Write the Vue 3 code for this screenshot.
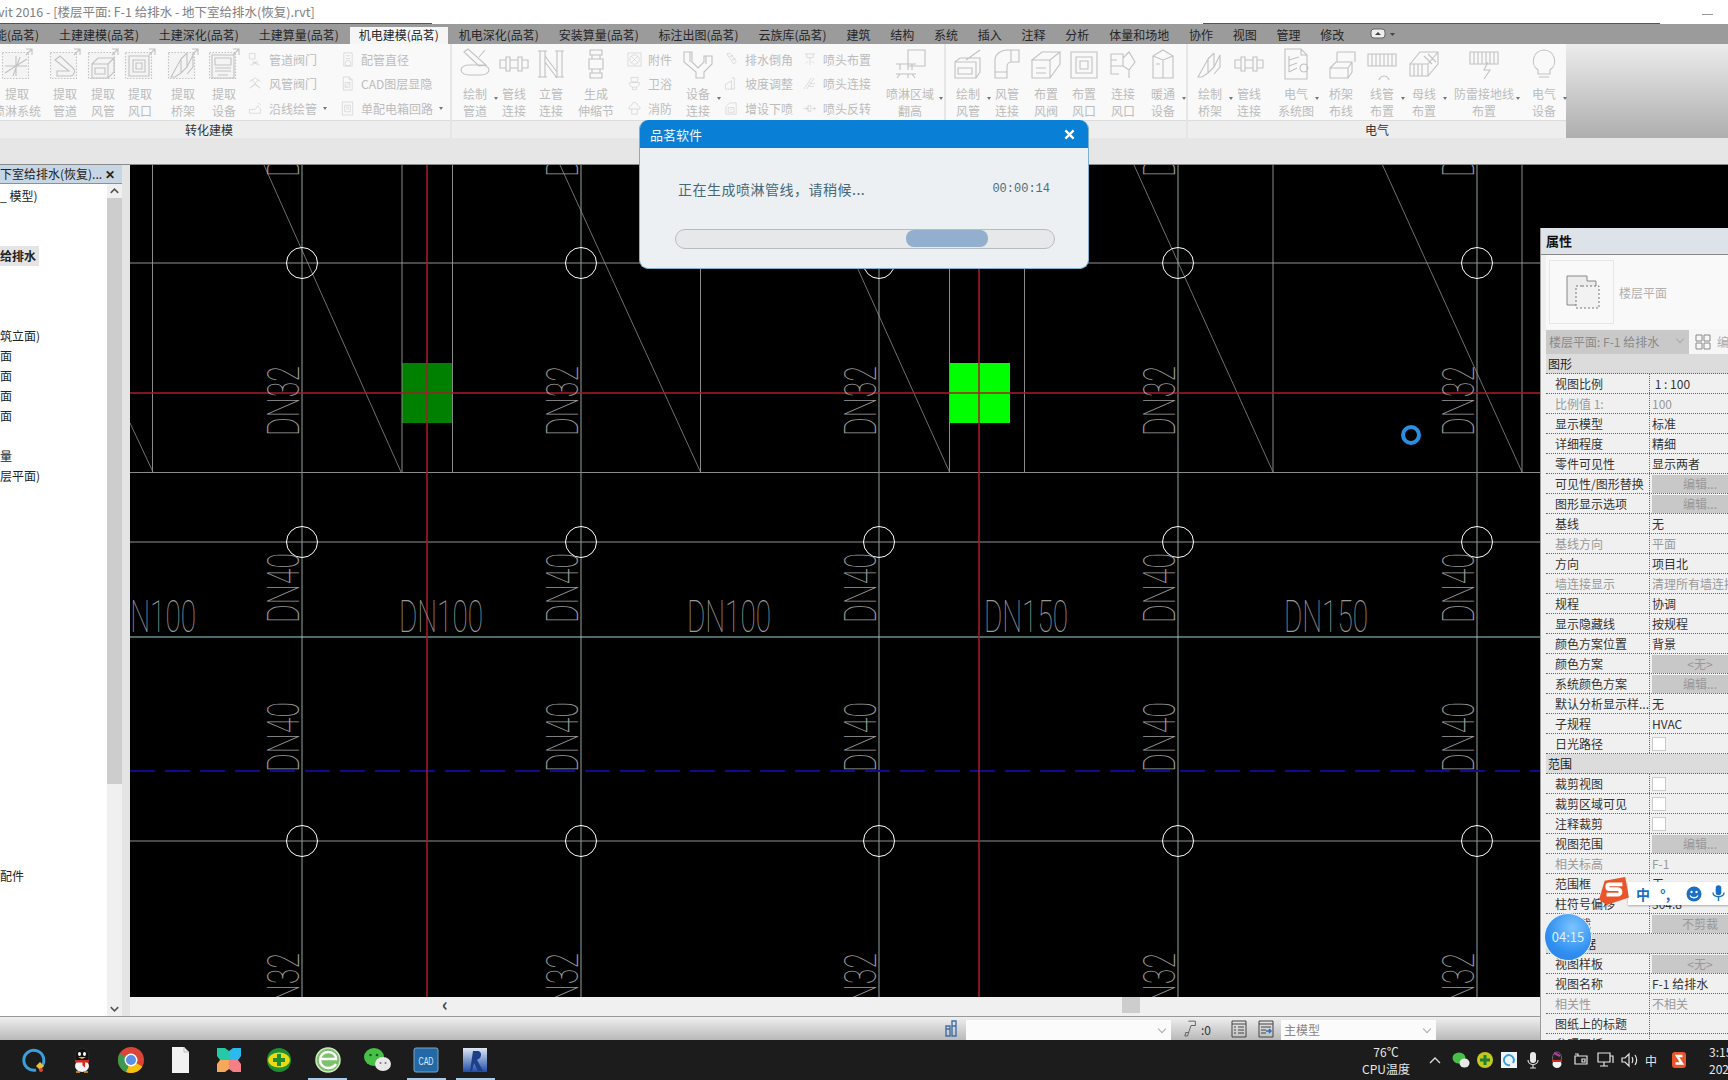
<template>
  <div class="page">
    <div class="titlebar">
      <span class="title-text">vit 2016 - [楼层平面: F-1 给排水 - 地下室给排水(恢复).rvt]</span>
      <span class="title-rule rule-a"></span>
      <span class="title-rule rule-b"></span>
      <span class="minimize"></span>
    </div>

    <div class="tabs">
      <div v-for="tab in tabs" :key="tab" class="tab" :class="{ active: tab === '机电建模(品茗)' }">{{ tab }}</div>
      <svg class="tab-toggle" viewBox="0 0 26 12" width="26" height="12">
        <rect x="1" y="1" width="14" height="9" rx="3" fill="#eee" stroke="#666" />
        <path d="M5 7l3-3 3 3z" fill="#444" />
        <path d="M20 5h5l-2.500 3z" fill="#444" />
      </svg>
    </div>

    <div class="ribbon">
      <div v-for="panel in panels" :key="panel.x" class="rb-panel" :style="{ width: panel.w + 'px' }">
        <div class="rb-items">
          <template v-for="item in panel.items" :key="item.cx">
            <div v-if="item.rows" class="rb-small" :style="itemStyle(item)">
              <div v-for="row in item.rows" :key="row.t" class="rb-row">
                <svg viewBox="0 0 32 32" width="15" height="15" class="ico">
                  <path :d="paths[row.i]" />
                </svg>
                <span>{{ row.t }}</span>
                <i v-if="row.more" class="caret"></i>
              </div>
            </div>
            <div v-else class="rb-big" :style="itemStyle(item)">
              <svg viewBox="0 0 32 32" width="32" height="32" class="ico">
                <rect v-if="item.frame" x="1.500" y="4.500" width="26" height="26" class="dots" />
                <path v-if="item.frame" d="M25 1h6v6M31 1l-6 6" />
                <path :d="paths[item.i]" />
              </svg>
              <div class="rb-label">{{ item.l[0] }}<br />{{ item.l[1] }}</div>
              <i v-if="item.more" class="caret big-caret"></i>
            </div>
          </template>
        </div>
        <div class="rb-title" :class="{ shifted: panel.x === 0 }">{{ panel.title }}</div>
      </div>
      <div class="rb-rest"></div>
    </div>

    <div class="subband"></div>

    <div class="main">
      <div class="browser">
        <div class="browser-head">
          <span>下室给排水(恢复)...</span>
          <b>✕</b>
        </div>
        <div class="browser-body">
          <div class="tree">
            <div v-for="(row, i) in tree" :key="i" class="tree-row">
              <span :class="{ current: row === '给排水' }">{{ row }}</span>
            </div>
          </div>
          <div class="vbar">
            <svg viewBox="0 0 16 12" width="15" height="14"><path d="M4 8l4-4 4 4" fill="none" stroke="#555" stroke-width="1.600" /></svg>
            <div class="vthumb"></div>
            <svg viewBox="0 0 16 12" width="15" height="14"><path d="M4 4l4 4 4-4" fill="none" stroke="#555" stroke-width="1.600" /></svg>
          </div>
        </div>
      </div>

      <div class="view">
        <svg class="cad" viewBox="130 165 1598 832" width="1598" height="832">
          <rect x="402" y="363" width="51" height="60" fill="#008000" />
          <rect x="950" y="363" width="60" height="60" fill="#00ff00" />
          <line v-for="x in shortLines" :key="'s' + x" :x1="x" :x2="x" y1="165" y2="472" stroke="#8a8a8a" />
          <line v-for="d in diagonals" :key="d[0]" :x1="d[0]" y1="165" :x2="d[1]" y2="472" stroke="#8a8a8a" stroke-width=".8" />
          <line x1="130" x2="153" y1="423" y2="472" stroke="#8a8a8a" stroke-width=".8" />
          <line v-for="x in gridX" :key="'g' + x" :x1="x" :x2="x" y1="165" y2="997" stroke="#8fa5a2" />
          <line v-for="y in gridY" :key="'h' + y" x1="130" x2="1728" :y1="y" :y2="y" stroke="#929292" />
          <line x1="130" x2="1728" y1="472.500" y2="472.500" stroke="#8a8a8a" />
          <line x1="130" x2="1728" y1="637" y2="637" stroke="#9ad6d6" />
          <line x1="130" x2="1728" y1="771" y2="771" stroke="#0c0c8c" stroke-width="2" stroke-dasharray="25 10" />
          <line x1="130" x2="1728" y1="393" y2="393" stroke="#a81c2a" stroke-width="1.500" />
          <line x1="427" x2="427" y1="165" y2="997" stroke="#a81c2a" stroke-width="1.500" />
          <line x1="979" x2="979" y1="165" y2="997" stroke="#a81c2a" stroke-width="1.500" />
          <g v-for="x in gridX" :key="'c' + x">
            <circle v-for="y in gridY" :key="y" :cx="x" :cy="y" r="15.500" fill="none" stroke="#fff" />
            <text v-for="t in vLabels" :key="t.y" class="dn" :transform="`translate(${x - 3} ${t.y}) rotate(-90)`" textLength="70" lengthAdjust="spacingAndGlyphs">{{ t.t }}</text>
          </g>
          <text v-for="t in hLabels" :key="t.x" class="dn" :x="t.x" y="632" textLength="84" lengthAdjust="spacingAndGlyphs">{{ t.t }}</text>
          <circle cx="1411" cy="435" r="8" fill="none" stroke="#2a8fe0" stroke-width="4" />
        </svg>
        <div class="hbar">
          <span class="hbar-arrow">‹</span>
          <span class="hbar-thumb"></span>
        </div>
      </div>
    </div>

    <div class="status">
      <svg viewBox="0 0 16 20" width="16" height="20" class="status-ico">
        <path d="M3 8h4v10H3zM9 3h4v15H9zM3 11h4M9 8h4" fill="none" stroke="#3f6fa6" stroke-width="1.400" />
      </svg>
      <div class="status-input wide"><i class="chev"></i></div>
      <svg viewBox="0 0 16 20" width="14" height="20" class="status-pick">
        <path d="M5 1h8v5H8L4 18H1l1-4h3" fill="none" stroke="#555" />
      </svg>
      <span class="status-zero">:0</span>
      <svg viewBox="0 0 16 18" width="16" height="18" class="status-list">
        <path d="M1 1h14v16H1zM1 4h14M3 7h2M7 7h6M3 10h2M7 10h6M3 13h2M7 13h6" fill="none" stroke="#444" />
      </svg>
      <svg viewBox="0 0 16 18" width="16" height="18" class="status-list2">
        <path d="M1 1h14v16H1zM1 4h14M3 7h10M3 10h5M3 13h5" fill="none" stroke="#444" />
        <path d="M8 11h5M11 9l2 2-2 2" fill="none" stroke="#2a6fc0" stroke-width="1.500" />
      </svg>
      <div class="status-input narrow">主模型<i class="chev"></i></div>
    </div>

    <div class="taskbar">
      <div class="task-icons">
        <div class="slot">
          <svg viewBox="0 0 30 30" width="30" height="30">
            <path d="M24 21A10 10 0 1 0 18 25" fill="none" stroke="#3aa0dc" stroke-width="3" />
            <path d="M22 17l4 4-4 4-4-4z" fill="#e8c12c" />
            <circle cx="23" cy="25" r="2" fill="#d9483b" />
          </svg>
        </div>
        <div class="slot">
          <svg viewBox="0 0 30 30" width="30" height="30">
            <ellipse cx="15" cy="12" rx="7" ry="9" fill="#111" stroke="#2c2c2c" />
            <ellipse cx="15" cy="21" rx="7" ry="6" fill="#f4f4f4" />
            <ellipse cx="12.500" cy="9" rx="1.500" ry="2" fill="#fff" />
            <ellipse cx="17.500" cy="9" rx="1.500" ry="2" fill="#fff" />
            <path d="M11 12h8l-4 2z" fill="#f5b324" />
            <path d="M8 15h14v2.500H18v5l-2.500-2V17.500H8z" fill="#d8271f" />
            <path d="M9 27h4M17 27h4" stroke="#e8a11c" stroke-width="1.500" />
          </svg>
        </div>
        <div class="slot">
          <svg viewBox="0 0 30 30" width="30" height="30">
            <circle cx="15" cy="15" r="13" fill="#db4437" />
            <path d="M15 15L26.300 21.500A13 13 0 0 1 10 27z" fill="#f4c20d" />
            <path d="M15 15L10 27A13 13 0 0 1 3.700 8.500z" fill="#3d9a4c" />
            <circle cx="15" cy="15" r="6.500" fill="#fff" />
            <circle cx="15" cy="15" r="5" fill="#5b8fe8" />
          </svg>
        </div>
        <div class="slot">
          <svg viewBox="0 0 30 30" width="30" height="30"><path d="M7 2h12l5 5v21H7z" fill="#f2f2f2" /><path d="M19 2v5h5" fill="none" stroke="#bbb" /></svg>
        </div>
        <div class="slot">
          <svg viewBox="0 0 30 30" width="30" height="30">
            <rect x="3" y="3" width="12" height="12" fill="#26c9a6" />
            <rect x="15" y="3" width="12" height="12" fill="#2eb9ec" />
            <rect x="3" y="15" width="12" height="12" fill="#f5a85c" />
            <rect x="15" y="15" width="12" height="12" fill="#f47f86" />
            <path d="M3 11l3 4-3 4zM27 11l-3 4 3 4zM11 3l4 3 4-3zM11 27l4-3 4 3z" fill="#1c1c1c" />
          </svg>
        </div>
        <div class="slot">
          <svg viewBox="0 0 30 30" width="30" height="30">
            <circle cx="15" cy="15" r="12" fill="#1f8f33" />
            <ellipse cx="15" cy="15" rx="11" ry="7.500" fill="#ecd90f" />
            <path d="M13 9h4v4h4v4h-4v4h-4v-4H9v-4h4z" fill="#1f8f33" />
          </svg>
        </div>
        <div class="slot has-bar">
          <svg viewBox="0 0 30 30" width="30" height="30">
            <circle cx="15" cy="15" r="12" fill="#7cc26a" stroke="#d4e8c8" stroke-width="1.500" />
            <path d="M7 14h16c0-5-4-7-8-7s-8 3-8 8 4 8 8 8c3 0 6-1 8-4" fill="none" stroke="#fff" stroke-width="2.500" />
          </svg>
        </div>
        <div class="slot">
          <svg viewBox="0 0 30 30" width="30" height="30">
            <ellipse cx="12" cy="12" rx="10" ry="9" fill="#46c046" />
            <ellipse cx="21" cy="19" rx="8" ry="7" fill="#e8e8e8" />
            <circle cx="8.500" cy="10" r="1.300" fill="#1c5c1c" />
            <circle cx="15" cy="10" r="1.300" fill="#1c5c1c" />
            <circle cx="18.500" cy="18" r="1" fill="#777" />
            <circle cx="23.500" cy="18" r="1" fill="#777" />
          </svg>
        </div>
        <div class="slot has-bar">
          <svg viewBox="0 0 30 30" width="30" height="30">
            <rect x="3" y="3" width="24" height="24" rx="2" fill="#2369a8" stroke="#7fa4c4" />
            <text x="15" y="20" text-anchor="middle" class="cad-mark" textLength="15" lengthAdjust="spacingAndGlyphs">CAD</text>
          </svg>
        </div>
        <div class="slot has-bar">
          <svg viewBox="0 0 30 30" width="30" height="30">
            <defs>
              <linearGradient id="rvt" x1="0" x2="0" y1="0" y2="1">
                <stop offset="0" stop-color="#dfe8f4" />
                <stop offset="1" stop-color="#1e4ea8" />
              </linearGradient>
            </defs>
            <rect x="3" y="3" width="24" height="24" fill="url(#rvt)" />
            <path d="M10 26l3-20h5c3 0 4 4 2 7l-3 2 6 11h-5l-4-8-2 8z" fill="#1c3f88" />
          </svg>
        </div>
      </div>

      <div class="tray">
        <div class="temp">76℃<br />CPU温度</div>
        <svg viewBox="0 0 12 12" width="12" height="12" class="tray-up"><path d="M1 9l5-5 5 5" fill="none" stroke="#ddd" stroke-width="1.300" /></svg>
        <svg viewBox="0 0 18 18" width="18" height="18" class="tray-ico"><ellipse cx="7" cy="7" rx="6.500" ry="5.500" fill="#46c046" /><ellipse cx="12.500" cy="12" rx="5" ry="4.500" fill="#e8e8e8" /></svg>
        <svg viewBox="0 0 18 18" width="18" height="18" class="tray-ico"><circle cx="9" cy="9" r="8" fill="#c5c81f" /><path d="M7.500 4h3v3.500H14v3h-3.500V14h-3v-3.500H4v-3h3.500z" fill="#1f7f33" /></svg>
        <svg viewBox="0 0 18 18" width="18" height="18" class="tray-ico"><rect x="1" y="1" width="16" height="16" fill="#eef4fa" /><path d="M13 12a5 5 0 1 0-3 2" fill="none" stroke="#3aa0dc" stroke-width="2" /></svg>
        <svg viewBox="0 0 18 18" width="18" height="18" class="tray-ico"><rect x="6" y="1" width="6" height="11" rx="3" fill="#e8e8e8" /><path d="M4 9c0 6 10 6 10 0M9 13v4M6 17h6" fill="none" stroke="#ddd" stroke-width="1.200" /></svg>
        <svg viewBox="0 0 18 18" width="18" height="18" class="tray-ico"><ellipse cx="9" cy="7" rx="4.500" ry="6" fill="#222" stroke="#666" /><ellipse cx="9" cy="13" rx="4.500" ry="4" fill="#f2f2f2" /><path d="M4 9h10v2H4z" fill="#d8271f" /><path d="M6 2l6 3" stroke="#c038a8" stroke-width="2" /></svg>
        <svg viewBox="0 0 18 18" width="18" height="18" class="tray-ico"><path d="M3 5h12v8H3zM3 3h3v2M10 8h3v3h-3z" fill="none" stroke="#e4e4e4" stroke-width="1.200" /></svg>
        <svg viewBox="0 0 18 18" width="18" height="18" class="tray-ico"><path d="M2 2h12v9H2zM8 11v4M4 15h8M14 5h3v7" fill="none" stroke="#e4e4e4" stroke-width="1.200" /></svg>
        <svg viewBox="0 0 18 18" width="18" height="18" class="tray-ico"><path d="M2 7h3l4-4v12l-4-4H2zM12 6c1 2 1 4 0 6M15 4c2 3 2 7 0 10" fill="none" stroke="#e4e4e4" stroke-width="1.200" /></svg>
        <span class="tray-ime">中</span>
        <svg viewBox="0 0 18 18" width="18" height="18" class="tray-ico tray-sogou"><rect x="2" y="1" width="14" height="16" rx="3" fill="#e9542a" /><path d="M12.500 5H7l5 7.500H5.500" fill="none" stroke="#fff" stroke-width="2.400" /></svg>
        <div class="clock">3:15<br />2021/6/8</div>
      </div>
    </div>

    <div class="dialog">
      <div class="dialog-head">
        <span>品茗软件</span>
        <svg viewBox="0 0 12 12" width="11" height="11"><path d="M1.500 1.500l9 9M10.500 1.500l-9 9" stroke="#fff" stroke-width="2.500" /></svg>
      </div>
      <div class="dialog-body">
        <div class="dialog-msg">
          <span>正在生成喷淋管线，请稍候...</span>
          <span class="dialog-time">00:00:14</span>
        </div>
        <div class="progress"><div class="progress-thumb"></div></div>
      </div>
    </div>

    <div class="props">
      <div class="props-head">属性</div>
      <div class="props-type">
        <div class="type-box">
          <svg viewBox="0 0 40 40" width="40" height="40">
            <path d="M5 4h20v5h9v24H5z" fill="#ececec" stroke="#888" />
            <path d="M20 14h17v22H14V14h6" fill="#f2f2f2" stroke="#777" stroke-dasharray="2 2" />
          </svg>
        </div>
        <span>楼层平面</span>
      </div>
      <div class="props-select">
        <div class="select-box">楼层平面: F-1 给排水<i class="chev"></i></div>
        <svg viewBox="0 0 16 16" width="16" height="16"><path d="M1 1h6v6H1zM9 1h6v6H9zM1 9h6v6H1zM9 9h6v6H9z" fill="none" stroke="#888" /></svg>
        <span>编辑类型</span>
      </div>
      <template v-for="row in props" :key="row.k">
        <div v-if="row.group" class="prop-group">{{ row.k }}</div>
        <div v-else class="prop-row" :class="{ dim: row.dim }">
          <div class="prop-key">{{ row.k }}</div>
          <div class="prop-val">
            <span v-if="row.btn" class="prop-btn">{{ row.btn }}</span>
            <span v-else-if="row.check" class="prop-check"></span>
            <template v-else>{{ row.v }}</template>
          </div>
        </div>
      </template>
    </div>

    <div class="ime">
      <svg viewBox="0 0 32 30" width="32" height="28" class="ime-logo">
        <path d="M6 4l22-4 4 22-24 8L0 24z" fill="#e9542a" />
        <path d="M25 8H11c-3 0-3 5 0 5h9c4 0 4 6 0 6H8" fill="none" stroke="#fff" stroke-width="4" />
      </svg>
      <div class="ime-bar">
        <span class="ime-zh">中</span>
        <span class="ime-punct">°,</span>
        <svg viewBox="0 0 16 16" width="16" height="16"><circle cx="8" cy="8" r="7.500" fill="#1a6fc4" /><circle cx="5.500" cy="6" r="1.200" fill="#fff" /><circle cx="10.500" cy="6" r="1.200" fill="#fff" /><path d="M4 9.500c1.500 3 6.500 3 8 0" fill="none" stroke="#fff" stroke-width="1.300" /></svg>
        <svg viewBox="0 0 14 18" width="13" height="17"><rect x="4" y="0" width="6" height="11" rx="3" fill="#1a6fc4" /><path d="M1 8c0 6 12 6 12 0M7 13v4" fill="none" stroke="#1a6fc4" stroke-width="1.500" /></svg>
      </div>
    </div>

    <div class="timer">04:15</div>
  </div>
</template>

<script setup>
const tabs = [
  '能(品茗)', '土建建模(品茗)', '土建深化(品茗)', '土建算量(品茗)', '机电建模(品茗)', '机电深化(品茗)',
  '安装算量(品茗)', '标注出图(品茗)', '云族库(品茗)', '建筑', '结构', '系统', '插入', '注释', '分析',
  '体量和场地', '协作', '视图', '管理', '修改'
]

// ribbon glyphs, drawn in a 32x32 box
const paths = {
  sprink: 'M4 25L26 11M4 18H26M12 28L19 9M15 8V28',
  pipe: 'M6 12l5-4 13 12c3 3 1 8-3 8H8v-5h12L6 12z',
  duct: 'M5 16l6-6h16v14l-6 6H5zM5 16h16v14M21 16l6-6M8 20h10v6H8z',
  vent: 'M5 8h20v20H5zM9 12h12v12H9zM12 15h6v6h-6z',
  tray: 'M4 29l10-18v14l-6 4zM14 11l6-6M14 25l6-6V5M20 19l6-12v12l-6 7',
  equip: 'M4 7h22v23H4zM7 10h16v7H7zM7 20h16M7 23h16M10 27h10',
  vlv: 'M3 3h12v12H3zM5 28l10-7 10 7M9 19l12 9M21 19l-12 9',
  vlv2: 'M3 12l12-8 12 8M3 26l12-8 12 8M8 8l14 16M22 8L8 24',
  along: 'M3 18h12l6-8 6 8v8H3zM21 4l6 4',
  dia: 'M8 2h18v28H8zM12 8h10M12 14h10M11 24a6 6 0 1 0 12 0 6 6 0 1 0-12 0',
  layer: 'M7 2h13l6 6v22H7zM20 2v6h6M11 14h10v10H11zM11 24l10-10',
  box: 'M5 2h22v28H5zM10 9h12v14H10zM13 13h6M13 17h6',
  drawPipe: 'M2 22c0-3 4-5 8-5h12c4 0 8 2 8 5s-4 5-8 5H10c-4 0-8-2-8-5zM5 4l4-3 18 16-7 1zM20 9l6-7',
  joint: 'M2 12h6v8H2zM8 9h4v14H8zM12 12h8v8h-8zM20 9h4v14h-4zM24 12h6v8h-6z',
  riser: 'M5 3v26M10 3v26M22 3v26M27 3v26M10 8l12 16M10 14l12 16M3 3h9M20 3h9M3 29h9M20 29h9',
  expand: 'M10 2h12v5H10zM12 7h8v4h-8zM9 11h14v10H9zM12 21h8v4h-8zM10 25h12v5H10z',
  fan: 'M2 2h28v28H2zM16 6a10 10 0 1 0 .1 0zM9 9l14 14M23 9L9 23',
  bath: 'M8 3h16l-2 9H10zM5 14h22c0 8-6 10-11 10S5 22 5 14zM12 24v5h8v-5',
  fire: 'M16 3a6 6 0 0 1 6 6c4 1 6 5 6 8H4c0-3 2-7 6-8a6 6 0 0 1 6-6zM10 17v11h12V17',
  fitting: 'M2 4h8v10l6 6 6-6V8h8v8l-8 8v6H14v-6L2 14zM8 4v10M24 8v8',
  bevel: 'M6 4l6-2 14 18-5 6zM12 10l8-3M17 17l8-3',
  slope: 'M3 28V18l13-8v18zM16 4h6v24h-6',
  drop: 'M4 12l8-8h14v24H4zM9 14h12v10H9zM13 18h4',
  head: 'M6 4h22M10 4v8h14V4M17 12v8M8 24l4-4M17 28v-8M26 24l-4-4',
  headLink: 'M4 28l16-24M10 28l16-24M16 14c3 2 8 3 12 2M14 20c3 2 8 3 12 2',
  flip: 'M3 16h10M9 12l4 4-4 4M13 10h6v12h-6zM22 16h8M26 12v8',
  zone: 'M14 2h17v16H14zM2 16h20M6 16v6M14 16v6M18 16v6M2 26h20M6 26l-3 4M14 26v4M18 26l3 4',
  drawDuct: 'M3 14h21v16H3zM3 14l5-4h20v14l-4 6M6 20h14v6H6zM14 12L28 2',
  ductLink: 'M4 24V12C4 6 10 2 16 2h12v12h-8c-3 0-4 3-4 6v10H4zM4 24h12M20 2v12',
  damper: 'M2 12l10-8h18L20 12zM2 12v18h18V12M6 20h10M6 25h10M20 30l10-14V4',
  outlet: 'M3 4h26v26H3zM8 9h16v16H8zM12 13h8v8h-8z',
  linkOut: 'M4 6h12v12H4zM16 10l6-6 6 10-6 8-6-4zM22 22v8M4 12h6M4 18v8h8',
  hvac: 'M6 8l10-6 10 6v22H6zM6 8l10 4 10-4M16 12v18M9 16h4',
  bulb: 'M16 2a11 11 0 0 1 6 20v4H10v-4A11 11 0 0 1 16 2zM11 29h10',
  sysDoc: 'M5 1h16l6 6v24H5zM21 1v6h6M9 8v16M9 12l10-3M9 18l8-3M9 24l8-4M24 24a4 4 0 1 0-.1 0',
  route: 'M5 20l6-6h16v10l-4 6H5zM5 20h18v10M12 4h18v10M12 4v10M23 20l4-6',
  conduit: 'M2 6h28v12H2zM6 6v12M10 6v12M14 6v12M18 6v12M22 6v12M26 6v12M18 28a5 5 0 1 0 .1 0',
  busbar: 'M2 16L12 4h18v12L20 28H2zM2 16h18v12M20 16l10-12M6 16v12M10 16v12M14 16v12M16 8l8 8M20 6l8 8',
  lightning: 'M2 4h28v12H2zM6 4v12M10 4v12M14 4v12M18 4v12M22 4v12M26 4v12M20 14l-4 8h6l-6 9'
}

function big(cx, i, l, opts = {}) {
  return { cx, w: 38, i, l, ...opts }
}

function small(x, w, rows) {
  return { cx: x + w / 2, w, rows }
}

// items sit in a flex row, the margin is what is left between two item centres
function withMargins(list) {
  list.forEach(panel => {
    let end = panel.x
    panel.items.forEach(item => {
      item.ml = item.cx - item.w / 2 - end
      end = item.cx + item.w / 2
    })
  })
  return list
}

const panels = withMargins([
  {
    x: 0, w: 450, title: '转化建模',
    items: [
      big(17, 'sprink', ['提取', '喷淋系统'], { frame: true }),
      big(65, 'pipe', ['提取', '管道'], { frame: true }),
      big(103, 'duct', ['提取', '风管'], { frame: true }),
      big(140, 'vent', ['提取', '风口'], { frame: true }),
      big(183, 'tray', ['提取', '桥架'], { frame: true }),
      big(224, 'equip', ['提取', '设备'], { frame: true }),
      small(248, 92, [{ t: '管道阀门', i: 'vlv' }, { t: '风管阀门', i: 'vlv2' }, { t: '沿线绘管', i: 'along', more: true }]),
      small(340, 108, [{ t: '配管直径', i: 'dia' }, { t: 'CAD图层显隐', i: 'layer' }, { t: '单配电箱回路', i: 'box', more: true }])
    ]
  },
  {
    x: 452, w: 492, title: '',
    items: [
      big(475, 'drawPipe', ['绘制', '管道'], { more: true }),
      big(514, 'joint', ['管线', '连接']),
      big(551, 'riser', ['立管', '连接']),
      big(596, 'expand', ['生成', '伸缩节']),
      small(627, 50, [{ t: '附件', i: 'fan' }, { t: '卫浴', i: 'bath' }, { t: '消防', i: 'fire' }]),
      big(698, 'fitting', ['设备', '连接'], { more: true }),
      small(724, 72, [{ t: '排水倒角', i: 'bevel' }, { t: '坡度调整', i: 'slope' }, { t: '增设下喷', i: 'drop' }]),
      small(802, 72, [{ t: '喷头布置', i: 'head' }, { t: '喷头连接', i: 'headLink' }, { t: '喷头反转', i: 'flip' }]),
      { ...big(910, 'zone', ['喷淋区域', '翻高'], { more: true }), w: 58 }
    ]
  },
  {
    x: 946, w: 240, title: '',
    items: [
      big(968, 'drawDuct', ['绘制', '风管'], { more: true }),
      big(1007, 'ductLink', ['风管', '连接']),
      big(1046, 'damper', ['布置', '风阀']),
      big(1084, 'outlet', ['布置', '风口']),
      big(1123, 'linkOut', ['连接', '风口']),
      big(1163, 'hvac', ['暖通', '设备'], { more: true })
    ]
  },
  {
    x: 1188, w: 378, title: '电气',
    items: [
      big(1210, 'tray', ['绘制', '桥架'], { more: true }),
      big(1249, 'joint', ['管线', '连接']),
      big(1296, 'sysDoc', ['电气', '系统图'], { more: true }),
      big(1341, 'route', ['桥架', '布线']),
      big(1382, 'conduit', ['线管', '布置'], { more: true }),
      big(1424, 'busbar', ['母线', '布置'], { more: true }),
      { ...big(1484, 'lightning', ['防雷接地线', '布置'], { more: true }), w: 64 },
      big(1544, 'bulb', ['电气', '设备'], { more: true })
    ]
  }
])

function itemStyle(item) {
  return { width: item.w + 'px', marginLeft: item.ml + 'px' }
}

const tree = [
  '_ 模型)', '', '', '给排水', '', '', '', '筑立面)', '面', '面', '面', '面', '', '量', '层平面)',
  '', '', '', '', '', '', '', '', '', '', '', '', '', '', '', '', '', '', '', '配件'
]

const gridX = [302, 581, 879, 1178, 1477]
const gridY = [263, 542, 841]
const shortLines = [152.5, 402, 452.5, 700.5, 949.5, 1024.5, 1273, 1522]
const diagonals = [[264, 401], [560, 700.5], [811, 949.5], [1134, 1273], [1382.5, 1522]]
const vLabels = [
  { t: 'DN32', y: 177 },
  { t: 'DN32', y: 436 },
  { t: 'DN40', y: 623 },
  { t: 'DN40', y: 772 },
  { t: 'DN32', y: 1023 }
]
const hLabels = [
  { t: 'DN100', x: 112 },
  { t: 'DN100', x: 399 },
  { t: 'DN100', x: 687 },
  { t: 'DN150', x: 984 },
  { t: 'DN150', x: 1284 }
]

const edit = '编辑...'
const props = [
  { k: '图形', group: true },
  { k: '视图比例', v: ' 1 : 100' },
  { k: '比例值 1:', v: '100', dim: true },
  { k: '显示模型', v: '标准' },
  { k: '详细程度', v: '精细' },
  { k: '零件可见性', v: '显示两者' },
  { k: '可见性/图形替换', btn: edit },
  { k: '图形显示选项', btn: edit },
  { k: '基线', v: '无' },
  { k: '基线方向', v: '平面', dim: true },
  { k: '方向', v: '项目北' },
  { k: '墙连接显示', v: '清理所有墙连接', dim: true },
  { k: '规程', v: '协调' },
  { k: '显示隐藏线', v: '按规程' },
  { k: '颜色方案位置', v: '背景' },
  { k: '颜色方案', btn: '<无>' },
  { k: '系统颜色方案', btn: edit },
  { k: '默认分析显示样...', v: '无' },
  { k: '子规程', v: 'HVAC' },
  { k: '日光路径', check: true },
  { k: '范围', group: true },
  { k: '裁剪视图', check: true },
  { k: '裁剪区域可见', check: true },
  { k: '注释裁剪', check: true },
  { k: '视图范围', btn: edit },
  { k: '相关标高', v: 'F-1', dim: true },
  { k: '范围框', v: '无' },
  { k: '柱符号偏移', v: '304.8' },
  { k: '截剪裁', btn: '不剪裁' },
  { k: '标识数据', group: true },
  { k: '视图样板', btn: '<无>' },
  { k: '视图名称', v: 'F-1 给排水' },
  { k: '相关性', v: '不相关', dim: true },
  { k: '图纸上的标题', v: '' },
  { k: '参照图纸', v: '' }
]
</script>

<style>
html,
body {
  margin: 0;
  background: #000;
}
</style>

<style scoped>
.page {
  position: relative;
  width: 1728px;
  height: 1080px;
  overflow: hidden;
  display: flex;
  flex-direction: column;
  background: #e4e4e4;
  font-family: "Noto Sans CJK SC", "Liberation Sans", sans-serif;
  font-size: 12px;
  color: #222;
}

.titlebar {
  position: relative;
  height: 24px;
  flex: none;
  background: #fff;
  line-height: 24px;
  color: #808080;
  font-size: 12.500px;
}

.title-text {
  display: block;
  margin-left: -2px;
  white-space: nowrap;
}

.title-rule {
  position: absolute;
  bottom: 0;
  height: 1px;
  background: #555;
}

.rule-a {
  left: 0;
  width: 432px;
}

.rule-b {
  left: 1203px;
  width: 457px;
}

.minimize {
  position: absolute;
  left: 1702px;
  top: 14px;
  width: 11px;
  height: 1px;
  background: #999;
}

.tabs {
  height: 20px;
  flex: none;
  display: flex;
  align-items: center;
  background: #9b9b9b;
}

.tab {
  height: 20px;
  line-height: 22px;
  padding: 0 9.900px;
  color: #262626;
  white-space: nowrap;
}

.tab:first-child {
  padding-left: 0;
  margin-left: -5px;
}

.tab.active {
  align-self: flex-end;
  background: #f5f5f5;
  height: 17px;
  line-height: 16px;
  padding: 0 9px;
  margin: 0 1px;
}

.tab-toggle {
  margin-left: 16px;
}

.ribbon {
  height: 94px;
  flex: none;
  display: flex;
  gap: 2px;
  background: #e6e6e6;
}

.rb-panel {
  flex: none;
  display: flex;
  flex-direction: column;
  background: #f9f9f9;
}

.rb-items {
  height: 76px;
  display: flex;
}

.rb-big {
  position: relative;
  flex: none;
  display: flex;
  flex-direction: column;
  align-items: center;
  padding-top: 4px;
  color: #bcbcbc;
}

.rb-label {
  margin-top: 5px;
  line-height: 17px;
  text-align: center;
  white-space: nowrap;
}

.ico {
  fill: none;
  stroke: #c2c2c2;
  stroke-width: 1.100;
  flex: none;
}

.dots {
  stroke-dasharray: 1.500 1.500;
  fill: #f4f4f4;
}

.rb-small {
  flex: none;
  padding-top: 3px;
  color: #bcbcbc;
}

.rb-row {
  height: 24.500px;
  display: flex;
  align-items: center;
  gap: 6px;
  white-space: nowrap;
}

.caret {
  display: inline-block;
  width: 0;
  height: 0;
  border-left: 2.500px solid transparent;
  border-right: 2.500px solid transparent;
  border-top: 3px solid #777;
}

.big-caret {
  position: absolute;
  right: -4px;
  top: 53px;
}

.rb-title {
  height: 17px;
  line-height: 17px;
  text-align: center;
  border-top: 1px solid #dcdcdc;
  background: #eee;
  color: #333;
  font-size: 12px;
}

.rb-title.shifted {
  padding-right: 32px;
}

.rb-rest {
  flex: 1;
  margin-left: -2px;
  background: linear-gradient(#ececec, #aeaeae);
}

.subband {
  height: 26px;
  flex: none;
  background: #e6e6e6;
  border-bottom: 1px solid #8a8a8a;
}

.main {
  height: 851px;
  flex: none;
  display: flex;
  justify-content: space-between;
  border-bottom: 1px solid #999;
}

.browser {
  width: 122px;
  flex: none;
  display: flex;
  flex-direction: column;
}

.browser-head {
  height: 18px;
  flex: none;
  display: flex;
  justify-content: space-between;
  padding: 0 7px 0 0;
  line-height: 18px;
  background: #c7d6e4;
  border-bottom: 1px solid #8a9199;
  white-space: nowrap;
  overflow: hidden;
  font-size: 12px;
}

.browser-head b {
  font-size: 12px;
  color: #222;
}

.browser-body {
  flex: 1;
  display: flex;
  background: #fff;
}

.tree {
  flex: 1;
  min-width: 0;
  overflow: hidden;
  padding-top: 2px;
}

.tree-row {
  height: 20px;
  line-height: 20px;
  white-space: nowrap;
}

.current {
  display: inline-block;
  padding-right: 3px;
  background: #e4e4e4;
  font-weight: 700;
}

.vbar {
  width: 15px;
  flex: none;
  display: flex;
  flex-direction: column;
  background: #f0f0f0;
}

.vbar svg {
  flex: none;
}

.vthumb {
  height: 586px;
  margin-bottom: auto;
  background: #cdcdcd;
}

.view {
  width: 1598px;
  flex: none;
  display: flex;
  flex-direction: column;
}

.cad {
  display: block;
  flex: none;
  background: #000;
}

.dn {
  font-family: Roboto, "Liberation Sans", sans-serif;
  font-weight: 100;
  font-size: 44px;
  fill: #a8a8a8;
  opacity: 0.9;
}

.hbar {
  flex: 1;
  position: relative;
  background: #f0f0f0;
}

.hbar-arrow {
  position: absolute;
  left: 312px;
  top: -3px;
  font-size: 18px;
  line-height: 19px;
  font-weight: 700;
  color: #444;
}

.hbar-thumb {
  position: absolute;
  left: 992px;
  top: 0;
  width: 18px;
  height: 16px;
  background: #cdcdcd;
}

.status {
  height: 23px;
  flex: none;
  display: flex;
  align-items: flex-end;
  background: linear-gradient(#efefef, #b9b9b9);
  padding-left: 943px;
}

.status-ico {
  margin-right: 7px;
  margin-bottom: 2px;
}

.status-input {
  position: relative;
  height: 20px;
  line-height: 20px;
  background: #fbfbfb;
  box-sizing: border-box;
  padding-left: 3px;
  color: #888;
}

.wide {
  width: 205px;
}

.narrow {
  width: 155px;
}

.chev {
  position: absolute;
  right: 6px;
  top: 6px;
  width: 5px;
  height: 5px;
  border-right: 1px solid #aaa;
  border-bottom: 1px solid #aaa;
  transform: rotate(45deg);
}

.status-pick {
  margin: 0 0 1px 13px;
}

.status-zero {
  margin: 0 0 2px 3px;
  width: 30px;
  color: #333;
}

.status-list {
  margin: 0 11px 2px 0;
}

.status-list2 {
  margin: 0 7px 2px 0;
}

.taskbar {
  position: relative;
  z-index: 3;
  height: 40px;
  flex: none;
  display: flex;
  background: #1c1c1c;
  color: #e6e6e6;
}

.task-icons {
  display: flex;
  padding-left: 8px;
}

.slot {
  position: relative;
  width: 49.200px;
  display: flex;
  align-items: center;
  justify-content: center;
}

.has-bar::after {
  content: "";
  position: absolute;
  left: 5px;
  right: 5px;
  bottom: 0;
  height: 2px;
  background: #a7cbe8;
}

.cad-mark {
  font-family: "Liberation Sans", sans-serif;
  font-size: 11px;
  fill: #dfe9f2;
}

.tray {
  position: absolute;
  left: 1356px;
  top: 0;
  display: flex;
  align-items: center;
  height: 40px;
}

.temp {
  width: 60px;
  text-align: center;
  line-height: 17px;
  font-size: 12px;
}

.tray-up {
  margin: 0 5px 0 13px;
}

.tray-ico {
  margin-left: 6px;
}

.tray-ime {
  margin-left: 7px;
  width: 17px;
  font-size: 12px;
}

.tray-sogou {
  margin-left: 8px;
}

.clock {
  margin-left: 21px;
  line-height: 17px;
  white-space: nowrap;
}

.dialog {
  position: absolute;
  left: 639px;
  top: 120px;
  width: 450px;
  height: 149px;
  z-index: 2;
  box-sizing: border-box;
  border-radius: 9px;
  overflow: hidden;
  background: #ecf0f3;
  border: 1px solid #7fb1cf;
  border-top: 0;
  display: flex;
  flex-direction: column;
}

.dialog-head {
  height: 28px;
  flex: none;
  display: flex;
  align-items: center;
  justify-content: space-between;
  padding: 0 13px 0 10px;
  background: #0a7fd6;
  color: #f0f6fb;
  font-size: 13px;
}

.dialog-body {
  flex: 1;
  padding: 31px 34px 0 35px;
}

.dialog-msg {
  display: flex;
  justify-content: space-between;
  line-height: 20px;
  font-size: 14px;
  letter-spacing: 0.500px;
  color: #456878;
  padding: 0 4px 0 3px;
}

.dialog-time {
  font-family: "Liberation Mono", monospace;
  font-size: 12px;
  letter-spacing: 0;
  color: #4f6d7a;
}

.progress {
  position: relative;
  margin-top: 30px;
  height: 20px;
  box-sizing: border-box;
  border: 1px solid #b8bcc0;
  border-radius: 10px;
  background: #e6e8ea;
  margin-right: -1px;
}

.progress-thumb {
  position: absolute;
  left: 230px;
  top: 0;
  width: 82px;
  height: 17px;
  border-radius: 8px;
  background: #92afcd;
}

.props {
  position: absolute;
  left: 1540px;
  top: 228px;
  width: 208px;
  z-index: 1;
  box-sizing: border-box;
  background: #f0f0f0;
  padding: 0 2px 0 5px;
  border-left: 1px solid #9a9a9a;
}

.props-head {
  height: 27px;
  margin: 0 -2px 0 -5px;
  padding-left: 5px;
  line-height: 26px;
  font-weight: 700;
  font-size: 13px;
  color: #111;
  background: #dde3e8;
  border-bottom: 1px solid #888;
  box-sizing: border-box;
}

.props-type {
  height: 74px;
  display: flex;
  align-items: center;
  gap: 5px;
  background: #f9f9f9;
  color: #b0b0b0;
}

.type-box {
  width: 65px;
  height: 64px;
  margin-left: 3px;
  display: flex;
  align-items: center;
  justify-content: center;
  border: 1px solid #e6e6e6;
  box-sizing: border-box;
}

.props-select {
  height: 25px;
  display: flex;
  align-items: center;
  gap: 6px;
  background: #f6f6f6;
  color: #aaa;
  white-space: nowrap;
}

.props-select svg {
  flex: none;
}

.select-box {
  position: relative;
  width: 143px;
  height: 24px;
  line-height: 24px;
  flex: none;
  padding-left: 3px;
  box-sizing: border-box;
  background: #c9c9c9;
  color: #8a8a8a;
}

.prop-group {
  height: 20px;
  line-height: 19px;
  padding-left: 2px;
  box-sizing: border-box;
  background: #dcdcdc;
  border-bottom: 1px dotted #666;
}

.prop-row {
  height: 20px;
  display: grid;
  grid-template-columns: 104px 1fr;
  box-sizing: border-box;
  border-bottom: 1px dotted #666;
  line-height: 19px;
  white-space: nowrap;
  color: #333;
}

.prop-row.dim {
  color: #999;
}

.prop-key {
  padding-left: 9px;
  overflow: hidden;
  border-right: 1px dotted #666;
}

.prop-val {
  padding-left: 2px;
  overflow: hidden;
  white-space: pre;
  display: flex;
  align-items: center;
}

.prop-btn {
  width: 96px;
  height: 18px;
  line-height: 18px;
  text-align: center;
  background: #c8c8c8;
  color: #989898;
  flex: none;
}

.prop-check {
  width: 12px;
  height: 12px;
  background: #fff;
  border: 1px solid #ccc;
}

.ime {
  position: absolute;
  left: 1598px;
  top: 877px;
  z-index: 2;
  display: flex;
  align-items: flex-end;
}

.ime-logo {
  position: relative;
  z-index: 1;
  margin-right: -2px;
}

.ime-bar {
  width: 100px;
  height: 23px;
  display: flex;
  align-items: center;
  gap: 10px;
  padding-left: 8px;
  background: #fff;
  box-shadow: 0 1px 2px rgba(0, 0, 0, 0.3);
}

.ime-zh {
  font-size: 14px;
  font-weight: 700;
  color: #1a6fc4;
}

.ime-punct {
  font-size: 14px;
  font-weight: 700;
  color: #1a6fc4;
  width: 16px;
}

.timer {
  position: absolute;
  left: 1545px;
  top: 914px;
  z-index: 2;
  width: 46px;
  height: 46px;
  border-radius: 50%;
  line-height: 46px;
  text-align: center;
  font-size: 13px;
  color: #dcefff;
  background: radial-gradient(circle at 60% 30%, #7cc4ff, #2f8ff0 60%, #2a7fe0);
  box-shadow: 0 0 0 1px #e8f2fb;
}
</style>
